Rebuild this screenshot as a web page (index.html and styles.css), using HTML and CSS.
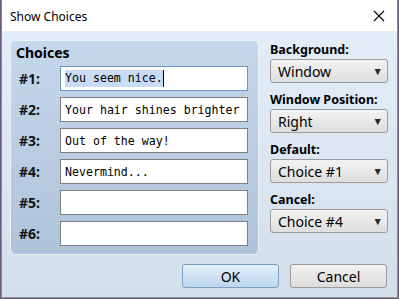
FILE: index.html
```html
<!DOCTYPE html>
<html lang="en">
<head>
    <meta charset="UTF-8">
    <title>Show Choices</title>
    <link rel="stylesheet" href="styles.css">
</head>
<body>
    <div class="window">
        <div class="titlebar">
            <span class="title">Show Choices</span>
            <svg class="close" width="12" height="12" viewBox="0 0 12 12">
                <path d="M1 1 L11 11 M11 1 L1 11" stroke="#000" stroke-width="1.1" fill="none"/>
            </svg>
        </div>

        <div class="content">
            <div class="main">
                <div class="panel">
                    <h3 class="panel_title">Choices</h3>
                    <div class="row">
                        <label>#1:</label>
                        <div class="field focused"><span class="sel">You seem nice.</span><span class="caret"></span></div>
                    </div>
                    <div class="row">
                        <label>#2:</label>
                        <div class="field">Your hair shines brighter</div>
                    </div>
                    <div class="row">
                        <label>#3:</label>
                        <div class="field">Out of the way!</div>
                    </div>
                    <div class="row">
                        <label>#4:</label>
                        <div class="field">Nevermind...</div>
                    </div>
                    <div class="row">
                        <label>#5:</label>
                        <div class="field"></div>
                    </div>
                    <div class="row">
                        <label>#6:</label>
                        <div class="field"></div>
                    </div>
                </div>

                <div class="side">
                    <div class="group">
                        <div class="side_label">Background:</div>
                        <div class="combo"><span>Window</span><span class="arrow">&#9660;</span></div>
                    </div>
                    <div class="group">
                        <div class="side_label">Window Position:</div>
                        <div class="combo"><span>Right</span><span class="arrow">&#9660;</span></div>
                    </div>
                    <div class="group">
                        <div class="side_label">Default:</div>
                        <div class="combo"><span>Choice #1</span><span class="arrow">&#9660;</span></div>
                    </div>
                    <div class="group">
                        <div class="side_label">Cancel:</div>
                        <div class="combo"><span>Choice #4</span><span class="arrow">&#9660;</span></div>
                    </div>
                </div>
            </div>

            <div class="buttons">
                <button class="btn default">OK</button>
                <button class="btn">Cancel</button>
            </div>
        </div>
    </div>
</body>
</html>
```

FILE: styles.css
```css
body {
    margin: 0;
    background: #6b5a7a;
    width: 399px;
    height: 299px;
    overflow: hidden;
}

.window {
    margin-left: 1px;
    width: 395px;
    height: 297px;
    border: 1px solid #8c8c8c;
    border-top: none;
    display: flex;
    flex-direction: column;
    background: linear-gradient(#e5eff9, #d3dfeb);
}

.titlebar {
    height: 31px;
    background: #fff;
    display: flex;
    align-items: center;
    justify-content: space-between;
    padding: 0 12px 0 8px;
    flex-shrink: 0;
}

.title {
    font-family: "Noto Sans", sans-serif;
    font-size: 12px;
    color: #000;
    margin-top: 1px;
}

.close {
    margin-top: 1px;
}

.content {
    padding: 9px 9px 0 8px;
    font-family: "Noto Sans", sans-serif;
}

.main {
    display: flex;
    gap: 11px;
}

.panel {
    width: 242px;
    height: 213px;
    border: 1px solid #eaf1f9;
    border-radius: 6px;
    background: linear-gradient(#c5d7eb, #afc3da);
    padding: 0 0 0 5px;
}

.panel_title {
    margin: 2px 0 3px 0;
    font-size: 14px;
    font-weight: bold;
    color: #000;
    height: 20px;
}

.row {
    display: flex;
    align-items: center;
    height: 25px;
    margin-bottom: 6px;
}

.row label {
    width: 44px;
    box-sizing: border-box;
    padding-left: 3px;
    font-size: 14px;
    font-weight: bold;
    color: #111;
}

.field {
    width: 182px;
    height: 23px;
    border: 1px solid #7e7e7e;
    background: #fff;
    font-family: "DejaVu Sans Mono", monospace;
    font-size: 11.6px;
    padding-left: 4px;
    white-space: nowrap;
    overflow: hidden;
    display: flex;
    align-items: center;
}

.field.focused {
    border-color: #6f93c4;
}

.sel {
    background: #c8dcf5;
    line-height: 17px;
}

.caret {
    display: inline-block;
    width: 1px;
    height: 17px;
    background: #000;
}

.side {
    display: flex;
    flex-direction: column;
    padding-top: 1px;
}

.group {
    height: 50px;
}

.side_label {
    font-size: 12.5px;
    font-weight: bold;
    color: #000;
    height: 18px;
}

.combo {
    width: 118px;
    height: 24px;
    border: 1px solid #9b9b9b;
    border-radius: 3px;
    background: linear-gradient(#f3f3f3, #dedede);
    display: flex;
    align-items: center;
    justify-content: space-between;
    padding: 0 4px 0 7px;
    box-sizing: border-box;
    font-size: 14px;
    color: #000;
}

.arrow {
    font-size: 10.5px;
    color: #2a2a2a;
}

.buttons {
    display: flex;
    justify-content: flex-end;
    gap: 11px;
    margin-top: 9px;
    padding-right: 1px;
}

.btn {
    width: 97px;
    height: 24px;
    font-family: "Noto Sans", sans-serif;
    font-size: 14px;
    color: #000;
    border: 1px solid #9a9a9a;
    border-radius: 3px;
    background: linear-gradient(#f2f2f2, #dcdcdc);
    padding: 0;
}

.btn.default {
    border-color: #7c9fc3;
    background: linear-gradient(#e6f1fb, #bcd5ec);
}
```
